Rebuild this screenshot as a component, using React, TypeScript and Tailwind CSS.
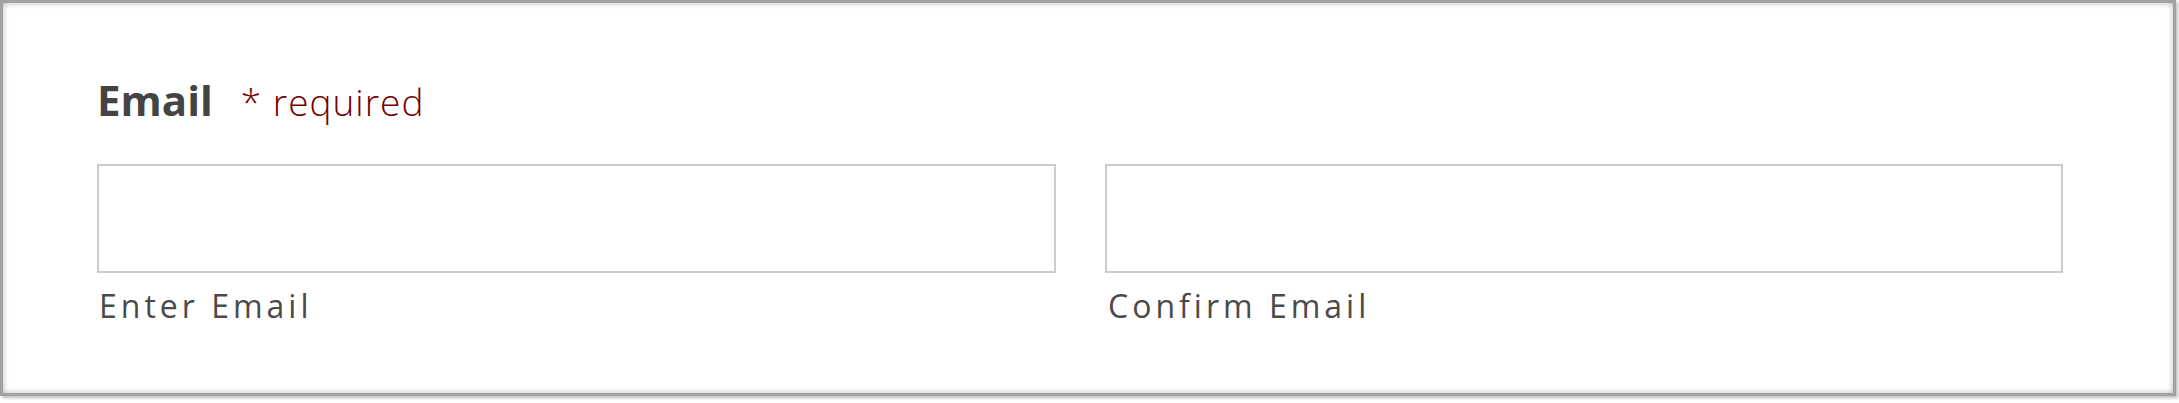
import React from "react";

export default function App() {
  return (
    <div className="w-[2179px] h-[403px] bg-white" style={{ fontFamily: "'Open Sans', Lato, sans-serif" }}>
      <div className="w-[2176px] h-[396px] border-[3px] border-[#a2a2a2] bg-white shadow-[inset_0_0_6px_rgba(0,0,0,0.28),2px_2px_3px_rgba(0,0,0,0.25)] pl-[94px] pt-[76px]">
        <div className="flex items-baseline h-[48px] leading-none">
          <span className="text-[42px] font-bold text-[#444444]">Email</span>
          <span className="ml-[28px] text-[37px] font-light tracking-[1px] text-[#760000]">* required</span>
        </div>
        <div className="flex gap-[49px] mt-[37px]">
          <div className="w-[959px] flex flex-col">
            <div className="h-[109px] border-2 border-[#cccccc] bg-white" />
            <div className="mt-[17px] text-[32px] leading-none font-normal tracking-[4px] text-[#4a4a4a] pl-[2px]">Enter Email</div>
          </div>
          <div className="w-[958px] flex flex-col">
            <div className="h-[109px] border-2 border-[#cccccc] bg-white" />
            <div className="mt-[17px] text-[32px] leading-none font-normal tracking-[4px] text-[#4a4a4a] pl-[3px]">Confirm Email</div>
          </div>
        </div>
      </div>
    </div>
  );
}
